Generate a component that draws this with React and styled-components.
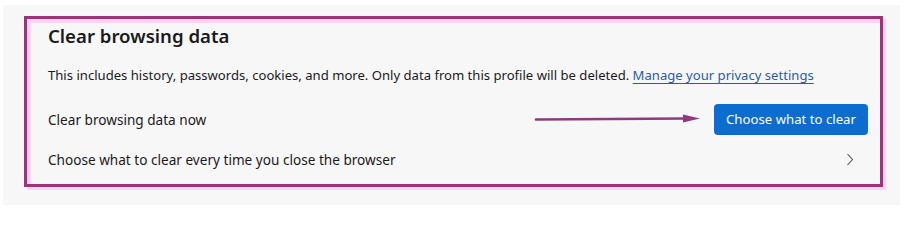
import React from 'react';
import styled, { createGlobalStyle } from 'styled-components';

const GlobalStyle = createGlobalStyle`
  html, body {
    margin: 0;
    padding: 0;
    background: #ffffff;
  }
  body {
    font-family: "Segoe UI", "Noto Sans", "Liberation Sans", sans-serif;
    color: #1b1b1b;
    -webkit-font-smoothing: antialiased;
  }
`;

/** White page around the settings card */
const Page = styled.div`
  width: 906px;
  height: 211px;
  box-sizing: border-box;
  padding: 5px 6px 6px 3px;
  background: #ffffff;
`;

/** Light grey settings card */
const Panel = styled.section`
  height: 100%;
  box-sizing: border-box;
  padding: 11px 17px 18px 21px;
  background: #f7f7f7;
`;

/** Magenta annotation frame drawn round the section */
const Frame = styled.div`
  position: relative;
  height: 100%;
  box-sizing: border-box;
  border: 3px solid #9e3379;
  box-shadow: inset 4px 4px 0 #fcd4f3, 3px 3px 0 #fcd4f3;
  padding: 3px 12px 0 21px;
  display: flex;
  flex-direction: column;
`;

const Title = styled.h2`
  margin: 0;
  font-size: 18.6px;
  font-weight: 600;
  line-height: 28px;
  color: #1b1b1b;
`;

const Description = styled.p`
  margin: 15px 0 14px;
  font-size: 13.1px;
  line-height: 20px;
  color: #1b1b1b;
`;

const Link = styled.a`
  color: #2b5ca8;
  text-decoration: underline;
  text-underline-offset: 3px;
  cursor: pointer;
`;

const Row = styled.div`
  height: 40px;
  display: flex;
  align-items: center;
  justify-content: space-between;
  font-size: 13.6px;
`;

const Button = styled.button`
  height: 31px;
  width: 154px;
  border: none;
  border-radius: 4px;
  background: #0c6cd0;
  color: #ffffff;
  font-family: inherit;
  font-size: 13.2px;
  cursor: pointer;
`;

const Chevron = styled.span`
  width: 36px;
  display: flex;
  justify-content: center;
  color: #555555;
`;

/** Annotation arrow pointing at the button */
const Arrow = styled.svg`
  position: absolute;
  left: 505px;
  top: 92px;
  overflow: visible;
`;

export default function App() {
  return (
    <>
      <GlobalStyle />
      <Page>
        <Panel>
          <Frame>
            <Title>Clear browsing data</Title>
            <Description>
              This includes history, passwords, cookies, and more. Only data from this profile will be
              deleted. <Link>Manage your privacy settings</Link>
            </Description>
            <Row>
              <span>Clear browsing data now</span>
              <Button>Choose what to clear</Button>
            </Row>
            <Row>
              <span>Choose what to clear every time you close the browser</span>
              <Chevron>
                <svg width="8" height="13" viewBox="0 0 8 13">
                  <path d="M1.5 1 L6.5 6.5 L1.5 12" fill="none" stroke="currentColor" strokeWidth="1.1" />
                </svg>
              </Chevron>
            </Row>
            <Arrow width="170" height="16" viewBox="0 0 170 16">
              <path d="M4 8.5 L154 7.5" stroke="#8f3a80" strokeWidth="2.6" strokeLinecap="round" />
              <polygon points="151,3.5 168,7.5 151,11.5" fill="#8f3a80" />
            </Arrow>
          </Frame>
        </Panel>
      </Page>
    </>
  );
}
